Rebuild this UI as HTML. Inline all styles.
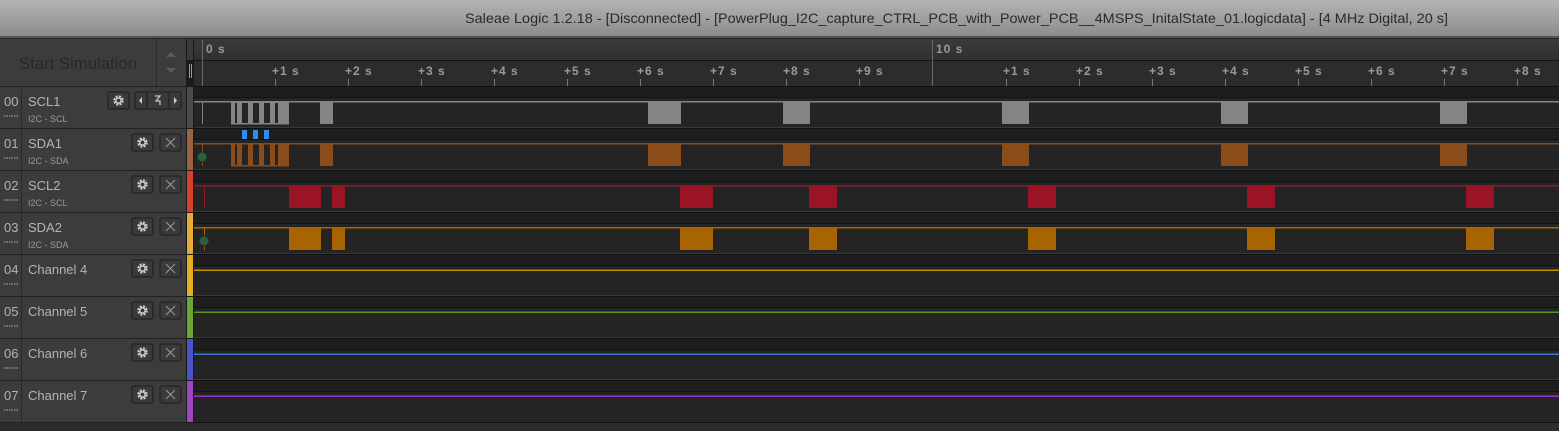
<!DOCTYPE html>
<html><head><meta charset="utf-8"><style>
html,body{margin:0;padding:0;background:#2a2a2a;overflow:hidden}
svg{display:block}
text{font-family:"Liberation Sans","DejaVu Sans",sans-serif}
</style></head><body>
<svg width="1559" height="431" viewBox="0 0 1559 431" xmlns="http://www.w3.org/2000/svg">
<defs>
<linearGradient id="tb" x1="0" y1="0" x2="0" y2="1"><stop offset="0" stop-color="#b4b4b4"/><stop offset="1" stop-color="#8c8c8c"/></linearGradient>
<linearGradient id="r1" x1="0" y1="0" x2="0" y2="1"><stop offset="0" stop-color="#3a3a3a"/><stop offset="1" stop-color="#303030"/></linearGradient>
<g id="gear"><rect x="0" y="0" width="21" height="17" rx="2" fill="#3a3a3a" stroke="#1c1c1c"/><circle cx="10.5" cy="8.5" r="4" fill="none" stroke="#ccc" stroke-width="2.4" stroke-dasharray="2 1.2"/><circle cx="10.5" cy="8.5" r="2.6" fill="none" stroke="#ccc" stroke-width="1.4"/></g>
<g id="xb"><rect x="0" y="0" width="21" height="17" rx="2" fill="#3a3a3a" stroke="#1c1c1c"/><path d="M6 4 L15 13 M15 4 L6 13" stroke="#999" stroke-width="1"/></g>
</defs>
<rect width="1559" height="431" fill="#262626"/>
<rect width="1559" height="36" fill="url(#tb)"/>
<rect y="36" width="1559" height="2" fill="#555"/>
<text x="465" y="23" font-size="14" fill="#2a2a2a" textLength="983" lengthAdjust="spacingAndGlyphs">Saleae Logic 1.2.18 - [Disconnected] - [PowerPlug_I2C_capture_CTRL_PCB_with_Power_PCB__4MSPS_InitalState_01.logicdata] - [4 MHz Digital, 20 s]</text>
<rect x="0" y="39" width="186" height="47" fill="#3c3c3c"/>
<rect x="156" y="39" width="1" height="47" fill="#2a2a2a"/>
<text x="19" y="69" font-size="16.5" fill="#282828" textLength="118" lengthAdjust="spacingAndGlyphs">Start Simulation</text>
<path d="M166 57 L171 52 L176 57 Z M166 68 L171 73 L176 68 Z" fill="#5a5a5a"/>
<rect x="186" y="39" width="8" height="392" fill="#1a1a1a"/>
<rect x="187" y="39" width="6" height="21" fill="#3a3a3a"/>
<rect x="189" y="64" width="1" height="14" fill="#999"/><rect x="191" y="64" width="1" height="14" fill="#999"/>
<rect x="194" y="39" width="1365" height="21" fill="url(#r1)"/>
<rect x="194" y="60" width="1365" height="1" fill="#111"/>
<rect x="194" y="61" width="1365" height="25" fill="#2c2c2c"/>
<rect x="194" y="86" width="1365" height="1" fill="#111"/>
<rect x="202" y="40" width="1" height="46" fill="#6a6a6a"/>
<rect x="932" y="40" width="1" height="46" fill="#6a6a6a"/>
<g font-size="12" font-weight="bold" fill="#9a9a9a" letter-spacing="1">
<text x="206" y="53">0 s</text><text x="936" y="53">10 s</text>
<text x="272" y="75">+1 s</text><text x="345" y="75">+2 s</text><text x="418" y="75">+3 s</text><text x="491" y="75">+4 s</text><text x="564" y="75">+5 s</text><text x="637" y="75">+6 s</text><text x="710" y="75">+7 s</text><text x="783" y="75">+8 s</text><text x="856" y="75">+9 s</text>
<text x="1003" y="75">+1 s</text><text x="1076" y="75">+2 s</text><text x="1149" y="75">+3 s</text><text x="1222" y="75">+4 s</text><text x="1295" y="75">+5 s</text><text x="1368" y="75">+6 s</text><text x="1441" y="75">+7 s</text><text x="1514" y="75">+8 s</text>
</g>
<g fill="#777">
<rect x="275" y="79" width="1" height="7"/><rect x="348" y="79" width="1" height="7"/><rect x="421" y="79" width="1" height="7"/><rect x="494" y="79" width="1" height="7"/><rect x="567" y="79" width="1" height="7"/><rect x="640" y="79" width="1" height="7"/><rect x="713" y="79" width="1" height="7"/><rect x="786" y="79" width="1" height="7"/><rect x="859" y="79" width="1" height="7"/>
<rect x="1006" y="79" width="1" height="7"/><rect x="1079" y="79" width="1" height="7"/><rect x="1152" y="79" width="1" height="7"/><rect x="1225" y="79" width="1" height="7"/><rect x="1298" y="79" width="1" height="7"/><rect x="1371" y="79" width="1" height="7"/><rect x="1444" y="79" width="1" height="7"/><rect x="1517" y="79" width="1" height="7"/>
</g>
<g>
<rect x="0" y="87" width="186" height="41" fill="#3c3c3c"/><rect x="0" y="129" width="186" height="41" fill="#3c3c3c"/><rect x="0" y="171" width="186" height="41" fill="#3c3c3c"/><rect x="0" y="213" width="186" height="41" fill="#3c3c3c"/><rect x="0" y="255" width="186" height="41" fill="#3c3c3c"/><rect x="0" y="297" width="186" height="41" fill="#3c3c3c"/><rect x="0" y="339" width="186" height="41" fill="#3c3c3c"/><rect x="0" y="381" width="186" height="41" fill="#3c3c3c"/>
<rect x="0" y="86" width="186" height="1" fill="#222"/><rect x="0" y="128" width="186" height="1" fill="#222"/><rect x="0" y="170" width="186" height="1" fill="#222"/><rect x="0" y="212" width="186" height="1" fill="#222"/><rect x="0" y="254" width="186" height="1" fill="#222"/><rect x="0" y="296" width="186" height="1" fill="#222"/><rect x="0" y="338" width="186" height="1" fill="#222"/><rect x="0" y="380" width="186" height="1" fill="#222"/><rect x="0" y="422" width="186" height="1" fill="#222"/>
<rect x="21" y="87" width="1" height="335" fill="#2a2a2a"/>
</g>
<g fill="#1e1e1e">
<rect x="194" y="87" width="1365" height="10"/><rect x="194" y="129" width="1365" height="10"/><rect x="194" y="171" width="1365" height="10"/><rect x="194" y="213" width="1365" height="10"/><rect x="194" y="255" width="1365" height="10"/><rect x="194" y="297" width="1365" height="10"/><rect x="194" y="339" width="1365" height="10"/><rect x="194" y="381" width="1365" height="10"/>
</g>
<g fill="#242424">
<rect x="194" y="98" width="1365" height="29"/><rect x="194" y="140" width="1365" height="29"/><rect x="194" y="182" width="1365" height="29"/><rect x="194" y="224" width="1365" height="29"/><rect x="194" y="266" width="1365" height="29"/><rect x="194" y="308" width="1365" height="29"/><rect x="194" y="350" width="1365" height="29"/><rect x="194" y="392" width="1365" height="29"/>
</g>
<g fill="#111">
<rect x="194" y="97" width="1365" height="1"/><rect x="194" y="139" width="1365" height="1"/><rect x="194" y="181" width="1365" height="1"/><rect x="194" y="223" width="1365" height="1"/><rect x="194" y="265" width="1365" height="1"/><rect x="194" y="307" width="1365" height="1"/><rect x="194" y="349" width="1365" height="1"/><rect x="194" y="391" width="1365" height="1"/>
<rect x="194" y="128" width="1365" height="1"/><rect x="194" y="170" width="1365" height="1"/><rect x="194" y="212" width="1365" height="1"/><rect x="194" y="254" width="1365" height="1"/><rect x="194" y="296" width="1365" height="1"/><rect x="194" y="338" width="1365" height="1"/><rect x="194" y="380" width="1365" height="1"/><rect x="194" y="422" width="1365" height="1"/>
</g>
<g fill="#383838"><rect x="194" y="127" width="1365" height="1"/><rect x="194" y="169" width="1365" height="1"/><rect x="194" y="211" width="1365" height="1"/><rect x="194" y="253" width="1365" height="1"/><rect x="194" y="295" width="1365" height="1"/><rect x="194" y="337" width="1365" height="1"/><rect x="194" y="379" width="1365" height="1"/></g>
<rect x="187" y="87" width="6" height="41" fill="#4a4a4a"/>
<rect x="187" y="129" width="6" height="41" fill="#9a6440"/>
<rect x="187" y="171" width="6" height="41" fill="#d8402c"/>
<rect x="187" y="213" width="6" height="41" fill="#e8aa38"/>
<rect x="187" y="255" width="6" height="41" fill="#e0b020"/>
<rect x="187" y="297" width="6" height="41" fill="#6aa832"/>
<rect x="187" y="339" width="6" height="41" fill="#4a54c8"/>
<rect x="187" y="381" width="6" height="41" fill="#a044c8"/>
<g font-size="13" fill="#b4b4b4">
<text x="4" y="106">00</text><text x="28" y="106">SCL1</text>
<text x="4" y="148">01</text><text x="28" y="148">SDA1</text>
<text x="4" y="190">02</text><text x="28" y="190">SCL2</text>
<text x="4" y="232">03</text><text x="28" y="232">SDA2</text>
<text x="4" y="274">04</text><text x="28" y="274">Channel 4</text>
<text x="4" y="316">05</text><text x="28" y="316">Channel 5</text>
<text x="4" y="358">06</text><text x="28" y="358">Channel 6</text>
<text x="4" y="400">07</text><text x="28" y="400">Channel 7</text>
</g>
<g font-size="9" fill="#9a9a9a">
<text x="28" y="122">I2C - SCL</text><text x="28" y="164">I2C - SDA</text><text x="28" y="206">I2C - SCL</text><text x="28" y="248">I2C - SDA</text>
</g>
<g fill="none" stroke="#777" stroke-dasharray="1.5 1" stroke-width="2">
<path d="M4 116 H19 M4 158 H19 M4 200 H19 M4 242 H19 M4 284 H19 M4 326 H19 M4 368 H19 M4 410 H19"/>
</g>
<use href="#gear" x="108" y="92"/>
<rect x="135" y="92" width="46" height="17" rx="2" fill="#3a3a3a" stroke="#1c1c1c"/>
<path d="M147 92 V109 M169 92 V109" stroke="#1c1c1c"/>
<path d="M142 97 L139 100.5 L142 104 Z M174 97 L177 100.5 L174 104 Z" fill="#ccc"/>
<path d="M155 96 H160 L156 101 H160 V105" fill="none" stroke="#ccc" stroke-width="1.2"/>
<use href="#gear" x="132" y="134"/><use href="#xb" x="160" y="134"/>
<use href="#gear" x="132" y="176"/><use href="#xb" x="160" y="176"/>
<use href="#gear" x="132" y="218"/><use href="#xb" x="160" y="218"/>
<use href="#gear" x="132" y="260"/><use href="#xb" x="160" y="260"/>
<use href="#gear" x="132" y="302"/><use href="#xb" x="160" y="302"/>
<use href="#gear" x="132" y="344"/><use href="#xb" x="160" y="344"/>
<use href="#gear" x="132" y="386"/><use href="#xb" x="160" y="386"/>
<g fill="#848484">
<rect x="194" y="101" width="1365" height="1.5"/>
<rect x="202" y="101" width="1" height="23"/>
<rect x="231" y="102" width="58" height="1"/>
<rect x="231" y="123" width="58" height="1.5"/>
<rect x="231" y="102" width="4" height="22"/><rect x="237" y="102" width="5" height="22"/><rect x="248" y="102" width="5" height="22"/><rect x="259" y="102" width="5" height="22"/><rect x="270" y="102" width="5" height="22"/><rect x="278" y="102" width="11" height="22"/>
<rect x="320" y="102" width="13" height="22"/>
<rect x="648" y="102" width="33" height="22"/><rect x="783" y="102" width="27" height="22"/><rect x="1002" y="102" width="27" height="22"/><rect x="1221" y="102" width="27" height="22"/><rect x="1440" y="102" width="27" height="22"/>
</g>
<g fill="#2f8fe8"><rect x="242" y="130" width="5" height="9"/><rect x="253" y="130" width="5" height="9"/><rect x="264" y="130" width="5" height="9"/></g>
<g fill="#8b4c1c">
<rect x="194" y="143" width="1365" height="1.5"/>
<rect x="202" y="143" width="1" height="23"/>
<rect x="231" y="165" width="58" height="1.5"/>
<rect x="231" y="144" width="4" height="22"/><rect x="237" y="144" width="5" height="22"/><rect x="248" y="144" width="5" height="22"/><rect x="259" y="144" width="5" height="22"/><rect x="270" y="144" width="5" height="22"/><rect x="278" y="144" width="11" height="22"/>
<rect x="320" y="144" width="13" height="22"/>
<rect x="648" y="144" width="33" height="22"/><rect x="783" y="144" width="27" height="22"/><rect x="1002" y="144" width="27" height="22"/><rect x="1221" y="144" width="27" height="22"/><rect x="1440" y="144" width="27" height="22"/>
</g>
<circle cx="202" cy="157" r="5" fill="#2e5e3e" stroke="#173020"/>
<g fill="#9a1426">
<rect x="194" y="185" width="1365" height="1.5"/>
<rect x="204" y="185" width="1" height="23"/>
<rect x="289" y="186" width="32" height="22"/><rect x="332" y="186" width="13" height="22"/>
<rect x="680" y="186" width="33" height="22"/><rect x="809" y="186" width="28" height="22"/><rect x="1028" y="186" width="28" height="22"/><rect x="1247" y="186" width="28" height="22"/><rect x="1466" y="186" width="28" height="22"/>
</g>
<g fill="#a86400">
<rect x="194" y="227" width="1365" height="1.5"/>
<rect x="204" y="227" width="1" height="23"/>
<rect x="289" y="228" width="32" height="22"/><rect x="332" y="228" width="13" height="22"/>
<rect x="680" y="228" width="33" height="22"/><rect x="809" y="228" width="28" height="22"/><rect x="1028" y="228" width="28" height="22"/><rect x="1247" y="228" width="28" height="22"/><rect x="1466" y="228" width="28" height="22"/>
</g>
<circle cx="204" cy="241" r="5" fill="#2e5e3e" stroke="#173020"/>
<rect x="194" y="269.5" width="1365" height="1.5" fill="#c09000"/>
<rect x="194" y="311.5" width="1365" height="1.5" fill="#5a9a20"/>
<rect x="194" y="353.5" width="1365" height="1.5" fill="#3a78d8"/>
<rect x="194" y="395.5" width="1365" height="1.5" fill="#9432d0"/>
<rect x="0" y="423" width="1559" height="8" fill="#2c2c2c"/>
</svg>
</body></html>
